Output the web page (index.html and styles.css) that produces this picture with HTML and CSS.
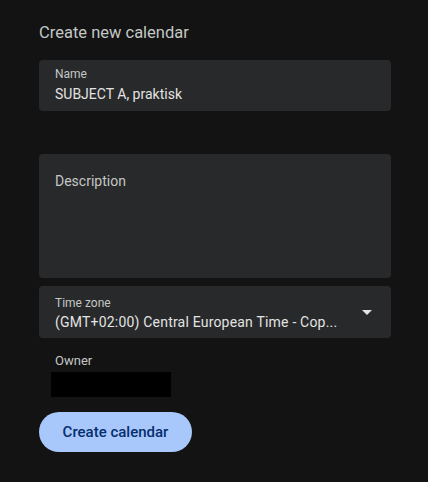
FILE: index.html
```html
<!DOCTYPE html>
<html>
<head>
<meta charset="utf-8">
<link rel="stylesheet" href="styles.css">
</head>
<body>
<div class="page">
  <h1 class="title">Create new calendar</h1>
  <div class="field field-name">
    <div class="label">Name</div>
    <div class="value">SUBJECT A, praktisk</div>
  </div>
  <div class="field field-desc">
    <div class="placeholder">Description</div>
  </div>
  <div class="field field-tz">
    <div class="tz-text">
      <div class="label">Time zone</div>
      <div class="value tz-value">(GMT+02:00) Central European Time - Cop...</div>
    </div>
    <svg class="arrow" width="10" height="5" viewBox="0 0 10 5"><path d="M0 0h10L5 5z" fill="#e3e3e3"/></svg>
  </div>
  <div class="owner">
    <div class="owner-label">Owner</div>
    <div class="redact"></div>
  </div>
  <button class="btn">Create calendar</button>
</div>
</body>
</html>
```
FILE: styles.css
```css
html, body { margin: 0; padding: 0; }
body {
  background: #131314;
  font-family: Roboto, "Liberation Sans", Arial, sans-serif;
  width: 428px;
  height: 482px;
  overflow: hidden;
}
.page {
  padding: 21px 0 0 39px;
  width: 352px;
  display: flex;
  flex-direction: column;
}
.title {
  margin: 0;
  font-size: 16.5px;
  line-height: 24px;
  font-weight: 400;
  color: #c4c7c5;
}
.field {
  background: #28292a;
  border-radius: 4px;
  box-sizing: border-box;
  padding: 0 16px;
}
.field-name {
  margin-top: 15px;
  height: 51px;
  padding-top: 6px;
}
.label {
  font-size: 12px;
  line-height: 16px;
  color: #c4c7c5;
}
.value {
  margin-top: 2px;
  font-size: 14px;
  line-height: 20px;
  color: #e3e3e3;
  white-space: nowrap;
}
.field-desc {
  margin-top: 43px;
  height: 124px;
  padding-top: 17px;
}
.placeholder {
  font-size: 14px;
  line-height: 20px;
  color: #c4c7c5;
}
.field-tz {
  margin-top: 8px;
  height: 52px;
  padding-top: 9px;
  display: flex;
  align-items: flex-start;
}
.field-tz .tz-value {
  margin-top: 1px;
  letter-spacing: 0.2px;
}
.tz-text {
  min-width: 0;
}
.arrow {
  margin-left: auto;
  margin-right: 3px;
  margin-top: 15px;
  display: block;
  flex: none;
}
.owner {
  padding: 15px 0 0 16px;
  display: flex;
  flex-direction: column;
}
.owner-label {
  font-size: 13px;
  line-height: 16px;
  color: #c4c7c5;
}
.redact {
  margin-left: -4px;
  margin-top: 3px;
  width: 120px;
  height: 25px;
  background: #000;
}
.btn {
  margin-top: 15px;
  align-self: flex-start;
  height: 40px;
  width: 153px;
  border: none;
  border-radius: 20px;
  background: #a8c7fa;
  color: #062e6f;
  font-family: Roboto, "Liberation Sans", Arial, sans-serif;
  font-size: 15px;
  font-weight: 500;
  padding: 0;
}
```
